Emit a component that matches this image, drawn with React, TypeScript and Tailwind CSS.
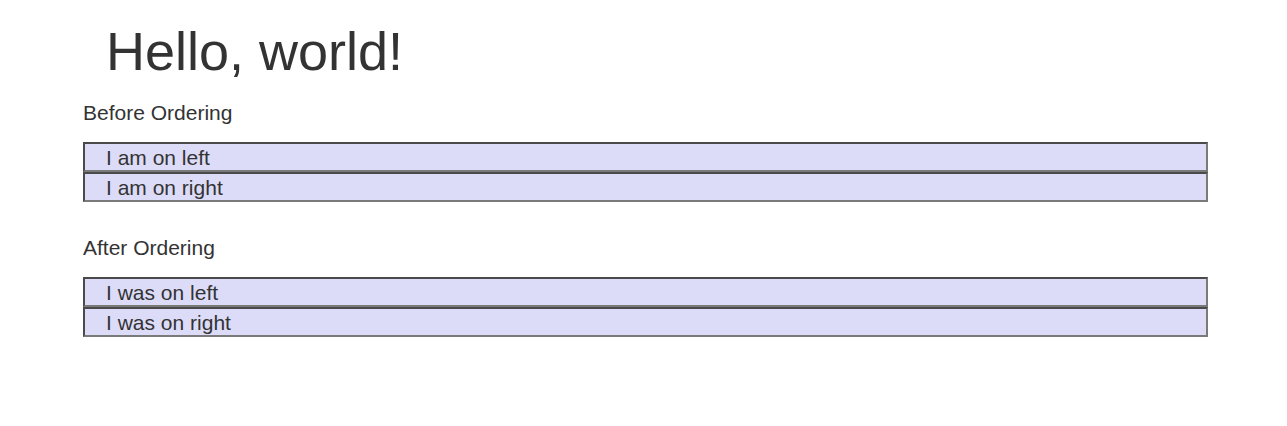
export default function App() {
  const before = ["I am on left", "I am on right"];
  const after = ["I was on left", "I was on right"];

  return (
    <div className="min-h-screen bg-white text-[#333] font-['Liberation_Sans',Arial,sans-serif]">
      <div className="ml-[83px] w-[1125px] pt-[22px]">
        <h1 className="pl-[23px] text-[54px] leading-[59px] font-normal">Hello, world!</h1>

        <p className="mt-[17px] text-[21px] leading-[30px]">Before Ordering</p>
        <List items={before} />

        <p className="mt-[31px] text-[21px] leading-[30px]">After Ordering</p>
        <List items={after} />
      </div>
    </div>
  );
}

function List({ items }: { items: string[] }) {
  return (
    <div className="mt-[14px]">
      {items.map((t) => (
        <div
          key={t}
          className="h-[30px] border-2 border-t-[#4a4a4a] border-l-[#4a4a4a] border-b-[#7a7a7a] border-r-[#7a7a7a] bg-[#dddcf8] pl-[21px] pt-[1px] text-[21px] leading-[26px]"
        >
          {t}
        </div>
      ))}
    </div>
  );
}
